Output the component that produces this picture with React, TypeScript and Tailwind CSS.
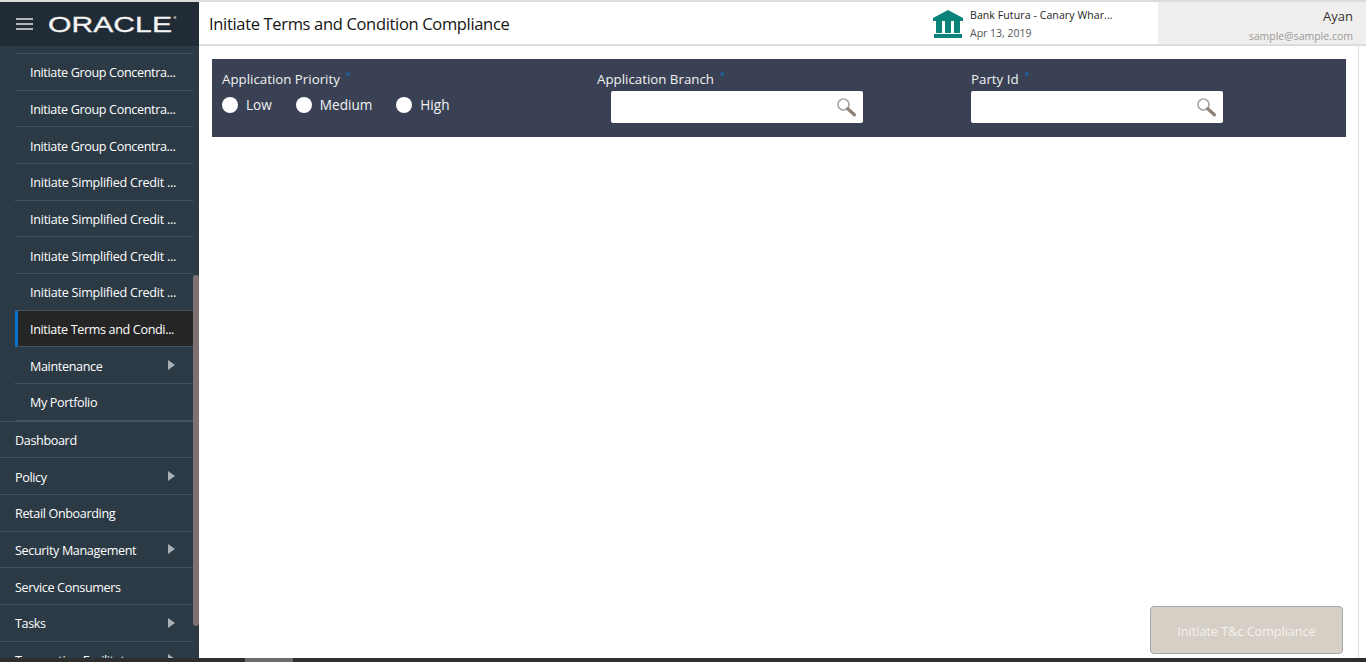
import React from "react";

const font = { fontFamily: '"Open Sans", "Noto Sans", sans-serif' };

function Tri() {
  return (
    <svg width="7" height="10" viewBox="0 0 7 10" className="shrink-0 -mt-[4px]">
      <path d="M0 0L7 5L0 10Z" fill="#a9b0b6" />
    </svg>
  );
}

function Row({ label, arrow, sub, active, last, top, wide }: { label: string; arrow?: boolean; sub?: boolean; active?: boolean; last?: boolean; top?: boolean; wide?: boolean }) {
  return (
    <div className={`${sub ? "ml-[15px]" : ""} ${top ? "border-t border-[#45535e]" : ""} h-[36.67px] shrink-0 box-content`}>
      <div
        className={`h-full flex items-center justify-between border-b pt-[4px] ${last ? "border-transparent" : "border-[#45535e]"} pl-[15px] pr-[18px] ${active ? "bg-[#252525] border-l-[3px] !border-l-[#0572ce] !pl-[12px]" : ""}`}
      >
        <span className={`text-[12.6px] text-white whitespace-nowrap ${wide ? "tracking-[-0.26px]" : "tracking-[-0.36px]"}`}>{label}</span>
        {arrow && <Tri />}
      </div>
    </div>
  );
}

function Search() {
  return (
    <svg width="20" height="20" viewBox="0 0 20 20" className="absolute right-[7px] top-[6px]">
      <circle cx="7.5" cy="7.5" r="5.5" fill="none" stroke="#a9a9a9" strokeWidth="1.7" />
      <path d="M11.8 11.8L18.300 17.800" stroke="#8c8279" strokeWidth="3.2" strokeLinecap="round" />
    </svg>
  );
}

function Req() {
  return <span className="text-[#0572ce] text-[9px] leading-none ml-[6px] relative -top-[5px]">*</span>;
}

function Radio({ label }: { label: string }) {
  return (
    <div className="flex items-center gap-[8px]">
      <span className="w-[16px] h-[16px] rounded-full bg-white" />
      <span className="text-[13.6px] text-[#f2f2f2] pt-[1px]">{label}</span>
    </div>
  );
}

function Field({ label, indent }: { label: string; indent: string }) {
  return (
    <div className="w-[374px] shrink-0 pt-[11px]">
      <div className="text-[13.3px] leading-[18px] text-[#f2f2f2] h-[21px]">
        {label}
        <Req />
      </div>
      <div className={`${indent} relative w-[252px] h-[32px] bg-white rounded-[2px]`}>
        <Search />
      </div>
    </div>
  );
}

export default function App() {
  return (
    <div className="w-[1366px] h-[662px] overflow-hidden bg-white flex flex-col relative" style={font}>
      <div className="flex-1 min-h-0 flex">
        <aside className="w-[199px] shrink-0 flex flex-col bg-[#2b3a45] relative overflow-hidden">
          <div className="h-[46px] shrink-0 bg-[#212b35] border-t-2 border-[#d9d9d9] flex items-center pl-[16px]">
            <div className="flex flex-col gap-[3px] w-[17px]">
              <span className="h-[2px] bg-[#b5b5b5]" />
              <span className="h-[2px] bg-[#b5b5b5]" />
              <span className="h-[2px] bg-[#b5b5b5]" />
            </div>
            <svg width="132" height="24" viewBox="0 0 132 24" className="ml-[15px]">
              <text x="0" y="20" fontSize="22.5" fill="#f4f4f4" textLength="124" lengthAdjust="spacingAndGlyphs" fontFamily="Liberation Sans" stroke="#f4f4f4" strokeWidth="0.3">ORACLE</text>
              <circle cx="127" cy="5.5" r="1.5" fill="#9a9a9a" />
            </svg>
          </div>
          <div className="flex-1 min-h-0 pt-[7px] pr-[6px] flex flex-col overflow-hidden">
            <div className="ml-[16px] h-0 border-t border-[#45535e]" />
            <Row sub label="Initiate Group Concentra..." />
            <Row sub label="Initiate Group Concentra..." />
            <Row sub label="Initiate Group Concentra..." />
            <Row sub wide label="Initiate Simplified Credit ..." />
            <Row sub wide label="Initiate Simplified Credit ..." />
            <Row sub wide label="Initiate Simplified Credit ..." />
            <Row sub wide label="Initiate Simplified Credit ..." />
            <Row sub active label="Initiate Terms and Condi..." />
            <Row sub arrow label="Maintenance" />
            <Row sub label="My Portfolio" />
            <Row top label="Dashboard" />
            <Row arrow label="Policy" />
            <Row label="Retail Onboarding" />
            <Row arrow label="Security Management" />
            <Row label="Service Consumers" />
            <Row arrow label="Tasks" />
            <Row arrow last label="Transaction Facilitators" />
          </div>
          <div className="absolute right-0 top-[275px] w-[6px] h-[351px] rounded-[3px] bg-[#7d7271]" />
        </aside>
        <main className="flex-1 min-w-0 flex flex-col">
          <header className="h-[46px] shrink-0 flex border-t-2 border-b-2 border-[#dcdcdc]">
            <div className="flex-1 pl-[10px] pt-[2px] flex items-center text-[16.5px] text-[#161513] tracking-[-0.33px]">
              Initiate Terms and Condition Compliance
            </div>
            <div className="w-[226px] flex items-center gap-[7px] pl-[1px] pt-[2px]">
              <svg width="30" height="28" viewBox="0 0 30 28">
                <path d="M15 0L30 8V11H0V8Z" fill="#0b8378" />
                <path d="M3 11h6v12H3zM12 11h6v12h-6zM21 11h6v12h-6z" fill="#0b8378" />
                <path d="M1 24h28V28H1z" fill="#0b8378" />
              </svg>
              <div className="flex flex-col">
                <span className="text-[10.5px] leading-[14px] tracking-[0.1px] text-[#222]">Bank Futura - Canary Whar...</span>
                <span className="text-[10.5px] leading-[14px] mt-[4px] text-[#555]">Apr 13, 2019</span>
              </div>
            </div>
            <div className="w-[208px] bg-[#f0efed] flex flex-col items-end pr-[13px]">
              <span className="text-[13px] leading-[18px] mt-[5px] text-[#333]">Ayan</span>
              <span className="text-[10.5px] leading-[14px] mt-[4px] text-[#9a9a9a]">sample@sample.com</span>
            </div>
          </header>
          <div className="flex-1 min-h-0 flex flex-col border-r border-[#dcdcdc] mr-[7px] pl-[13px] pr-[12px] pt-[13px] pb-[4px]">
            <section className="h-[78px] shrink-0 bg-[#3a4154] flex pl-[10px]">
              <div className="w-[375px] shrink-0 pt-[11px]">
                <div className="text-[13.3px] leading-[18px] text-[#f2f2f2] h-[22px]">
                  Application Priority
                  <Req />
                </div>
                <div className="flex gap-[24px] h-[26px] items-center">
                  <Radio label="Low" />
                  <Radio label="Medium" />
                  <Radio label="High" />
                </div>
              </div>
              <Field label="Application Branch" indent="ml-[14px]" />
              <Field label="Party Id" indent="" />
            </section>
            <div className="flex-1" />
            <div className="flex justify-end pr-[3px]">
              <button className="w-[193px] h-[48px] pt-[5px] bg-[#d6cfc5] border border-[#a3a8aa] rounded-[4px] text-[12.6px] text-[#f4f2ee]">
                Initiate T&amp;c Compliance
              </button>
            </div>
          </div>
        </main>
      </div>
      <div className="h-[4px] shrink-0 bg-[#2e2e2e] pl-[245px]">
        <div className="w-[48px] h-full bg-[#6b6b6b]" />
      </div>
    </div>
  );
}
